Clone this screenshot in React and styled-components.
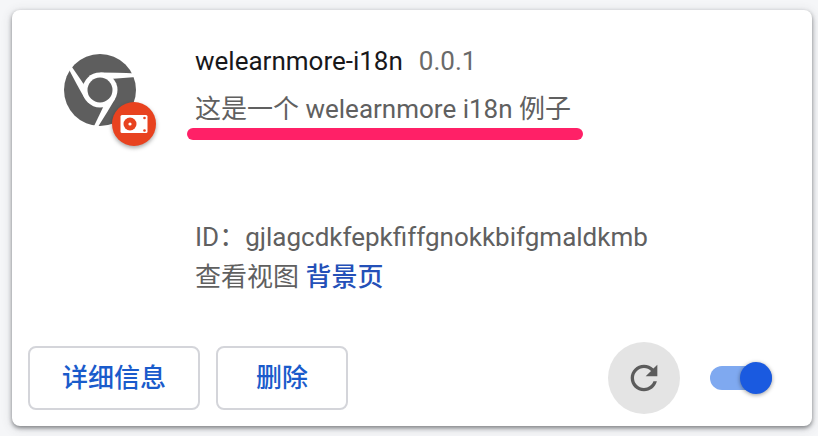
import React, { useState } from "react";
import styled, { createGlobalStyle } from "styled-components";

const GlobalStyle = createGlobalStyle`
  * { box-sizing: border-box; }
  body {
    margin: 0;
    background: #f5f6f8;
    font-family: Roboto, "Noto Sans CJK SC", sans-serif;
    font-size: 26px;
    line-height: 40px;
    color: #606060;
  }
`;

const Page = styled.main`
  padding: 10px 6px 10px 12px;
`;

const Card = styled.article`
  background: #fff;
  border-radius: 8px;
  box-shadow: 0 2px 4px rgba(60, 64, 67, 0.6), 0 2px 12px rgba(60, 64, 67, 0.16);
`;

const Body = styled.div`
  display: flex;
  gap: 59px;
  padding: 31px 24px 45px 52px;
`;

const IconWrap = styled.div`
  position: relative;
  flex: none;
  width: 72px;
  height: 72px;
  margin-top: 13px;
`;

const Logo = styled.svg`
  display: block;
  width: 100%;
  height: 100%;
`;

const Badge = styled.span`
  position: absolute;
  right: -20px;
  bottom: -20px;
  display: grid;
  place-items: center;
  width: 44px;
  height: 44px;
  border-radius: 50%;
  background: #e8421f;
  box-shadow: 0 2px 4px rgba(0, 0, 0, 0.35);
`;

const Content = styled.div`
  flex: 1;
  min-width: 0;
`;

const Heading = styled.header`
  display: flex;
  gap: 16px;
`;

const Name = styled.h1`
  margin: 0;
  font-size: 26px;
  font-weight: 400;
  color: #18181a;
`;

const Version = styled.span`
  color: #6a6a6a;
`;

const Description = styled.p`
  position: relative;
  width: fit-content;
  margin: 8px 0 88px;

  &::after {
    content: "";
    position: absolute;
    left: -8px;
    right: -12px;
    bottom: -11px;
    height: 12px;
    border-radius: 6px;
    background: #ff2067;
  }
`;

const Detail = styled.div`
  overflow-wrap: anywhere;
`;

const ViewLink = styled.a`
  color: #2450b8;
  font-weight: 500;
  text-decoration: none;
`;

const Footer = styled.footer`
  display: flex;
  align-items: center;
  gap: 16px;
  padding: 0 40px 12px 16px;
`;

const ActionButton = styled.button`
  height: 64px;
  padding: 0 ${(p) => (p.$wide ? 38 : 32)}px;
  border: 2px solid #d4d5da;
  border-radius: 8px;
  background: #fff;
  font: inherit;
  font-weight: 500;
  color: #1a5bcb;
  cursor: pointer;
`;

const ReloadButton = styled.button`
  display: grid;
  place-items: center;
  width: 72px;
  height: 72px;
  margin: 0 14px 0 auto;
  padding: 0;
  border: 0;
  border-radius: 50%;
  background: #e4e4e4;
  color: #5c5c5c;
  cursor: pointer;
`;

const Switch = styled.input`
  appearance: none;
  display: flex;
  align-items: center;
  justify-content: ${(p) => (p.checked ? "flex-end" : "flex-start")};
  width: 62px;
  height: 24px;
  margin: 0;
  border-radius: 12px;
  background: ${(p) => (p.checked ? "#7fa9f0" : "#bdc1c6")};
  cursor: pointer;

  &::before {
    content: "";
    flex: none;
    width: 32px;
    height: 32px;
    border-radius: 50%;
    background: ${(p) => (p.checked ? "#1a5ae0" : "#fff")};
    box-shadow: 0 1px 4px rgba(0, 0, 0, 0.4);
  }
`;

const ARM = "M0-17.5Q16-17.5 36-16.5L36-13L10-11Z";

function ChromeLogo() {
  return (
    <Logo viewBox="-36 -36 72 72" aria-hidden="true">
      <circle r="36" fill="#5e5e5e" />
      <g fill="#fff">
        <circle r="17.5" />
        <path d={ARM} />
        <path d={ARM} transform="rotate(120)" />
        <path d={ARM} transform="rotate(240)" />
      </g>
      <circle r="12.5" fill="#5e5e5e" />
    </Logo>
  );
}

function DriveIcon() {
  return (
    <svg width="28" height="20" viewBox="0 0 28 20" aria-hidden="true">
      <rect x="0.5" y="1" width="27" height="18" rx="1.5" fill="#fff" />
      <g fill="#e8421f">
        <circle cx="10" cy="10" r="6.5" />
        <circle cx="24.5" cy="4" r="1.3" />
        <circle cx="24.5" cy="16.5" r="1.3" />
      </g>
      <circle cx="10" cy="10" r="1.6" fill="#fff" />
    </svg>
  );
}

function ReloadIcon() {
  return (
    <svg width="40" height="40" viewBox="0 0 24 24" fill="currentColor" aria-hidden="true">
      <path d="M17.65 6.35C16.2 4.9 14.21 4 12 4c-4.42 0-7.99 3.58-7.99 8s3.57 8 7.99 8c3.73 0 6.84-2.55 7.73-6h-2.08c-.82 2.33-3.04 4-5.65 4-3.31 0-6-2.69-6-6s2.69-6 6-6c1.66 0 3.14.69 4.22 1.78L13 11h7V4l-2.35 2.35z" />
    </svg>
  );
}

export default function App() {
  const [enabled, setEnabled] = useState(true);
  return (
    <>
      <GlobalStyle />
      <Page>
        <Card>
          <Body>
            <IconWrap>
              <ChromeLogo />
              <Badge>
                <DriveIcon />
              </Badge>
            </IconWrap>
            <Content lang="zh-CN">
              <Heading>
                <Name>welearnmore-i18n</Name>
                <Version>0.0.1</Version>
              </Heading>
              <Description>这是一个 welearnmore i18n 例子</Description>
              <Detail>ID：gjlagcdkfepkfiffgnokkbifgmaldkmb</Detail>
              <Detail>
                查看视图 <ViewLink href="#background">背景页</ViewLink>
              </Detail>
            </Content>
          </Body>
          <Footer lang="zh-CN">
            <ActionButton type="button">详细信息</ActionButton>
            <ActionButton type="button" $wide>删除</ActionButton>
            <ReloadButton type="button" aria-label="重新加载">
              <ReloadIcon />
            </ReloadButton>
            <Switch
              type="checkbox"
              role="switch"
              aria-label="启用"
              checked={enabled}
              onChange={(e) => setEnabled(e.target.checked)}
            />
          </Footer>
        </Card>
      </Page>
    </>
  );
}
